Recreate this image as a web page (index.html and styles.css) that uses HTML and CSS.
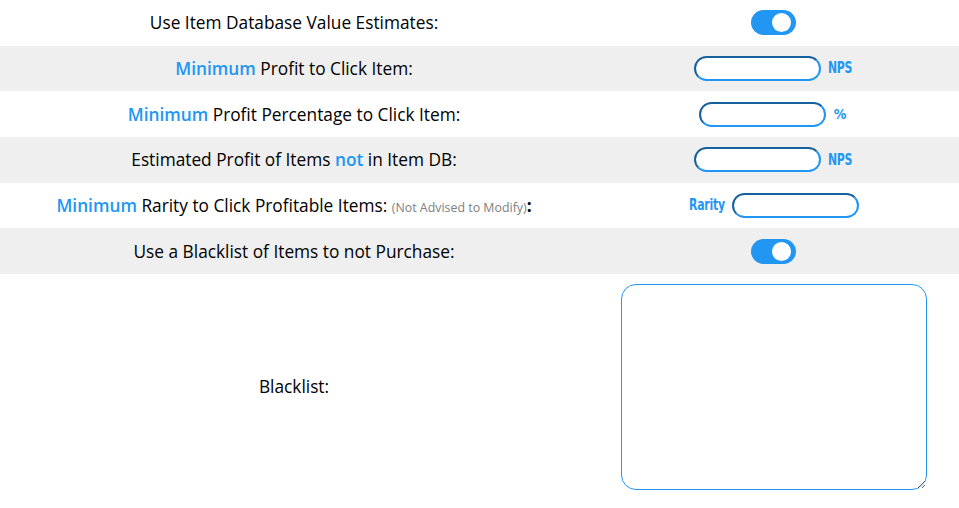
FILE: index.html
```html
<!DOCTYPE html>
<html>
<head>
<meta charset="utf-8">
<link rel="stylesheet" href="styles.css">
</head>
<body>
<div class="settings">
  <div class="row">
    <div class="label">Use Item Database Value Estimates:</div>
    <div class="control">
      <label class="switch"><input type="checkbox" checked><span class="slider"></span></label>
    </div>
  </div>
  <div class="row alt">
    <div class="label"><span class="hl">Minimum</span> Profit to Click Item:</div>
    <div class="control"><input class="field" type="text"><span class="unit after">NPS</span></div>
  </div>
  <div class="row">
    <div class="label"><span class="hl">Minimum</span> Profit Percentage to Click Item:</div>
    <div class="control wide"><input class="field" type="text"><span class="unit pct">%</span></div>
  </div>
  <div class="row alt">
    <div class="label">Estimated Profit of Items <span class="hl">not</span> in Item DB:</div>
    <div class="control"><input class="field" type="text"><span class="unit after">NPS</span></div>
  </div>
  <div class="row">
    <div class="label"><span class="hl">Minimum</span> Rarity to Click Profitable Items: <span class="note">(Not Advised to Modify)</span><b>:</b></div>
    <div class="control"><span class="unit before">Rarity</span><input class="field" type="text"></div>
  </div>
  <div class="row alt">
    <div class="label">Use a Blacklist of Items to not Purchase:</div>
    <div class="control">
      <label class="switch"><input type="checkbox" checked><span class="slider"></span></label>
    </div>
  </div>
  <div class="row tall">
    <div class="label">Blacklist:</div>
    <div class="control"><textarea class="blacklist"></textarea></div>
  </div>
</div>
</body>
</html>
```
FILE: styles.css
```css
html, body {
  margin: 0;
  padding: 0;
  background: #fff;
}
body {
  font-family: "Open Sans", "DejaVu Sans", sans-serif;
  font-size: 17.3px;
  color: #000;
}
.settings {
  display: flex;
  flex-direction: column;
}
.row {
  display: grid;
  grid-template-columns: 588px 1fr;
  align-items: center;
  height: 45.67px;
}
.row.alt {
  background: #efefef;
}
.row.tall {
  height: 226px;
}
.label {
  text-align: center;
}
.hl {
  color: #2196f3;
  font-weight: 600;
}
.note {
  color: #808080;
  font-size: 12.4px;
}
.control {
  display: flex;
  justify-content: center;
  align-items: center;
  gap: 7px;
}
.control.wide {
  gap: 8px;
}
.unit {
  display: inline-block;
  font-family: "DejaVu Sans Condensed", "Liberation Sans", sans-serif;
  font-stretch: condensed;
  font-weight: bold;
  font-size: 15.5px;
  letter-spacing: -0.3px;
  color: #2196f3;
  transform: scaleX(0.78);
}
.unit.after {
  transform-origin: left center;
  margin-right: -6px;
}
.unit.before {
  transform-origin: right center;
  margin-left: -9px;
}
.unit.pct {
  transform: none;
  font-size: 14px;
  margin-right: 2px;
}
.field {
  box-sizing: border-box;
  width: 127px;
  height: 25px;
  border: 2px inset #2196f3;
  border-radius: 13px;
  background: #fff;
  outline: none;
  margin: 0;
}
.switch {
  position: relative;
  display: inline-block;
  width: 45px;
  height: 25px;
}
.switch input {
  opacity: 0;
  width: 0;
  height: 0;
}
.slider {
  position: absolute;
  inset: 0;
  background: #2196f3;
  border-radius: 13px;
}
.slider::before {
  content: "";
  position: absolute;
  width: 19px;
  height: 19px;
  left: 21px;
  top: 3px;
  background: #fff;
  border-radius: 50%;
}
.blacklist {
  box-sizing: border-box;
  width: 306px;
  height: 206px;
  border: 1px solid #2196f3;
  border-radius: 15px;
  outline: none;
  margin: 0;
  resize: both;
}
```
